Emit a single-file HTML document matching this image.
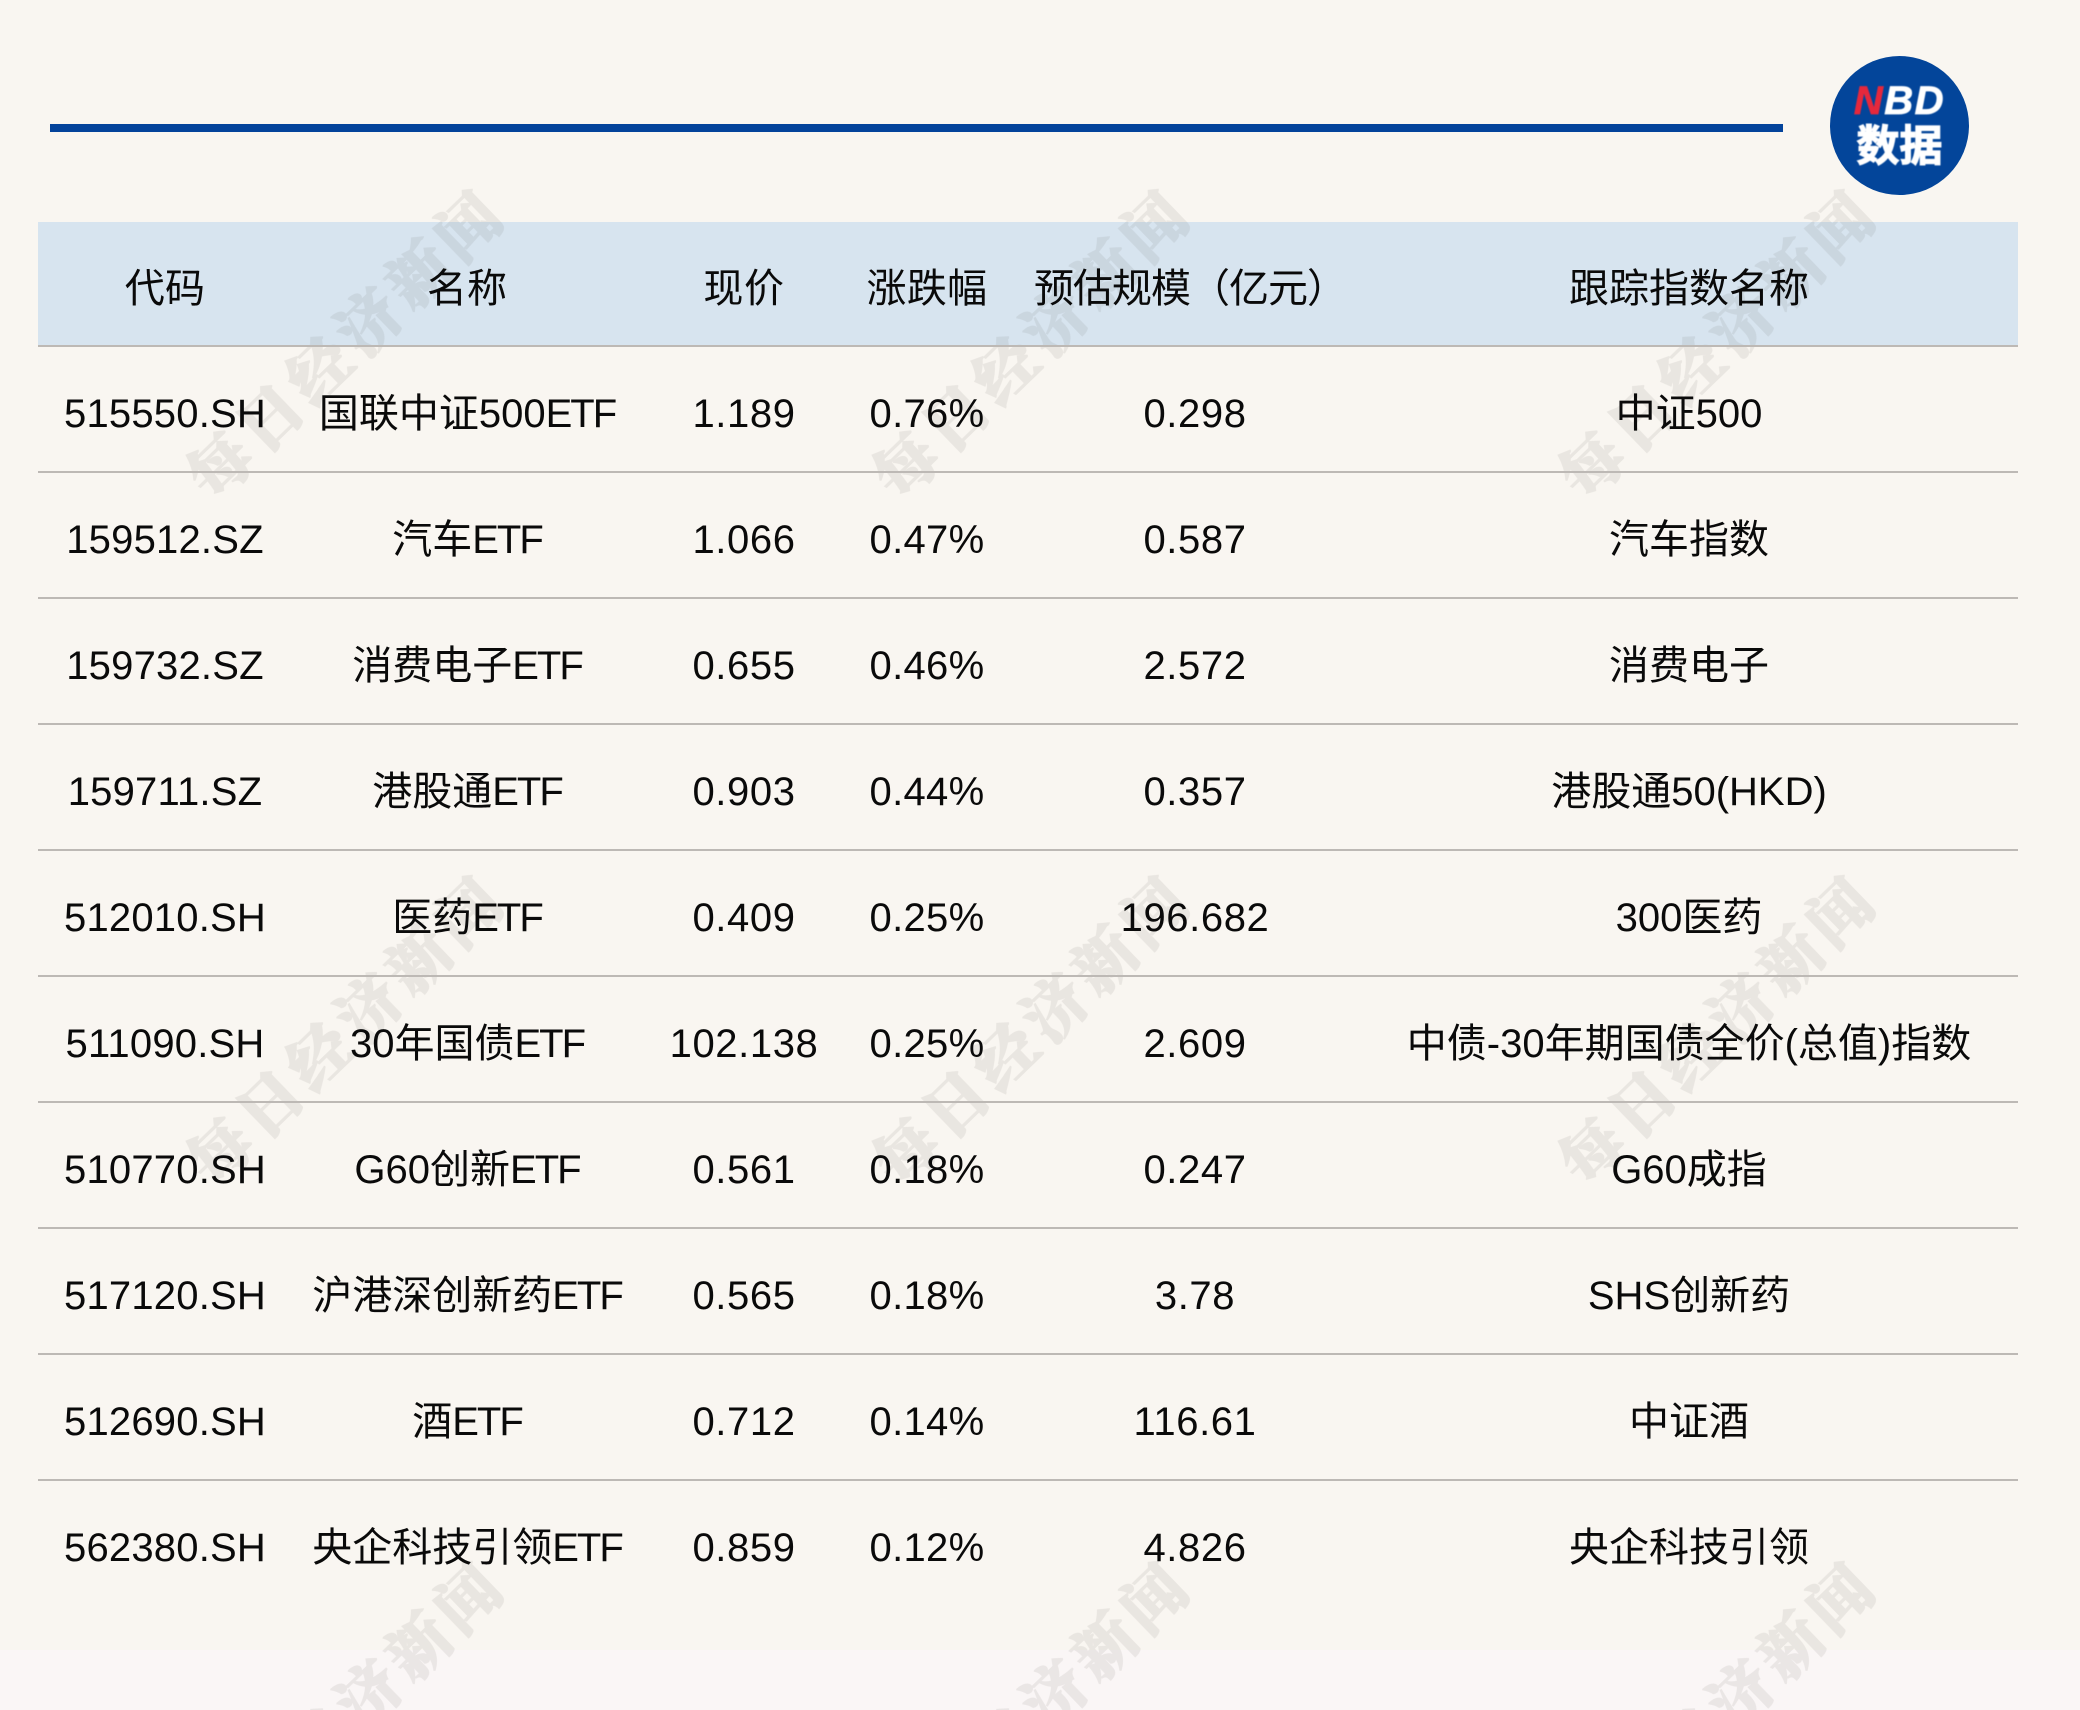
<!DOCTYPE html>
<html lang="zh-CN"><head><meta charset="utf-8"><title>NBD数据</title>
<style>
*{margin:0;padding:0;box-sizing:border-box}
html,body{width:2080px;height:1710px;overflow:hidden;background:#f9f6f1}
body{position:relative;font-family:"Liberation Sans","Noto Sans CJK SC",sans-serif;color:#0a0a0a;font-size:40px}
.low{position:absolute;left:0;right:0;top:1650px;height:60px;background:#faf6f6}
.bar{position:absolute;left:50px;top:124px;width:1733px;height:8px;background:#03439b}
.logo{position:absolute;left:1830px;top:56px;width:139px;height:139px;border-radius:50%;background:#03459a;overflow:hidden}
.logo div{position:absolute;left:0;width:139px;text-align:center;color:#fff;font-weight:700;white-space:nowrap;filter:blur(.5px)}
.n{top:23px;font-size:40px;line-height:45px;font-style:italic;letter-spacing:1.5px;-webkit-text-stroke:.8px #fff}
.n b{color:#e5283c;-webkit-text-stroke:.8px #e5283c}
.s{top:62px;font-size:43px;line-height:50px;font-family:"Noto Sans CJK SC",sans-serif;font-weight:900;-webkit-text-stroke:1.2px #fff}
.head{position:absolute;left:38px;top:222px;width:1980px;height:124px;background:#d7e4ef}
.ln{position:absolute;left:38px;width:1980px;height:2px;background:#bdb9b5}
.wms{position:absolute;left:0;top:0;width:2080px;height:1710px;overflow:hidden;display:block}
.wms text{font-family:"Noto Serif CJK SC",serif;font-weight:900;font-size:62px;letter-spacing:7px;text-anchor:middle;fill:#5a554e;stroke:#5a554e;stroke-width:1.5px}
.r{position:absolute;left:0;width:2080px;height:50px;line-height:50px;margin-top:1px}
.r span{position:absolute;top:0;width:640px;text-align:center;white-space:nowrap}
.r i{font-style:normal;letter-spacing:-2px}
.a{left:-155px;letter-spacing:.2px}.b{left:147px}.c{left:424px;letter-spacing:.6px}.d{left:607px;letter-spacing:.3px}.e{left:875px;letter-spacing:.6px}.f{left:1369px}
.r .e0{left:870px;letter-spacing:-1px}
</style></head><body>
<div class="low"></div>
<div class="head"></div>
<div class="bar"></div>
<div class="logo"><div class="n"><b>N</b>BD</div><div class="s">数据</div></div>

<svg class="wms" width="2080" height="1710" viewBox="0 0 2080 1710"><g opacity=".095">
<text transform="translate(347 344) rotate(-44)" y="22">每日经济新闻</text>
<text transform="translate(1033 344) rotate(-44)" y="22">每日经济新闻</text>
<text transform="translate(1719 344) rotate(-44)" y="22">每日经济新闻</text>
<text transform="translate(347 1030) rotate(-44)" y="22">每日经济新闻</text>
<text transform="translate(1033 1030) rotate(-44)" y="22">每日经济新闻</text>
<text transform="translate(1719 1030) rotate(-44)" y="22">每日经济新闻</text>
<text transform="translate(347 1716) rotate(-44)" y="22">每日经济新闻</text>
<text transform="translate(1033 1716) rotate(-44)" y="22">每日经济新闻</text>
<text transform="translate(1719 1716) rotate(-44)" y="22">每日经济新闻</text>
</g></svg>

<div class="ln" style="top:345px"></div>
<div class="ln" style="top:471px"></div>
<div class="ln" style="top:597px"></div>
<div class="ln" style="top:723px"></div>
<div class="ln" style="top:849px"></div>
<div class="ln" style="top:975px"></div>
<div class="ln" style="top:1101px"></div>
<div class="ln" style="top:1227px"></div>
<div class="ln" style="top:1353px"></div>
<div class="ln" style="top:1479px"></div>

<div class="r" style="top:263px"><span class="a">代码</span><span class="b">名称</span><span class="c">现价</span><span class="d">涨跌幅</span><span class="e0">预估规模（亿元）</span><span class="f">跟踪指数名称</span></div>
<div class="r" style="top:388px"><span class="a">515550.SH</span><span class="b">国联中证500<i>ETF</i></span><span class="c">1.189</span><span class="d">0.76%</span><span class="e">0.298</span><span class="f">中证500</span></div>
<div class="r" style="top:514px"><span class="a">159512.SZ</span><span class="b">汽车<i>ETF</i></span><span class="c">1.066</span><span class="d">0.47%</span><span class="e">0.587</span><span class="f">汽车指数</span></div>
<div class="r" style="top:640px"><span class="a">159732.SZ</span><span class="b">消费电子<i>ETF</i></span><span class="c">0.655</span><span class="d">0.46%</span><span class="e">2.572</span><span class="f">消费电子</span></div>
<div class="r" style="top:766px"><span class="a">159711.SZ</span><span class="b">港股通<i>ETF</i></span><span class="c">0.903</span><span class="d">0.44%</span><span class="e">0.357</span><span class="f">港股通50(HKD)</span></div>
<div class="r" style="top:892px"><span class="a">512010.SH</span><span class="b">医药<i>ETF</i></span><span class="c">0.409</span><span class="d">0.25%</span><span class="e">196.682</span><span class="f">300医药</span></div>
<div class="r" style="top:1018px"><span class="a">511090.SH</span><span class="b">30年国债<i>ETF</i></span><span class="c">102.138</span><span class="d">0.25%</span><span class="e">2.609</span><span class="f">中债-30年期国债全价(总值)指数</span></div>
<div class="r" style="top:1144px"><span class="a">510770.SH</span><span class="b">G60创新<i>ETF</i></span><span class="c">0.561</span><span class="d">0.18%</span><span class="e">0.247</span><span class="f">G60成指</span></div>
<div class="r" style="top:1270px"><span class="a">517120.SH</span><span class="b">沪港深创新药<i>ETF</i></span><span class="c">0.565</span><span class="d">0.18%</span><span class="e">3.78</span><span class="f">SHS创新药</span></div>
<div class="r" style="top:1396px"><span class="a">512690.SH</span><span class="b">酒<i>ETF</i></span><span class="c">0.712</span><span class="d">0.14%</span><span class="e">116.61</span><span class="f">中证酒</span></div>
<div class="r" style="top:1522px"><span class="a">562380.SH</span><span class="b">央企科技引领<i>ETF</i></span><span class="c">0.859</span><span class="d">0.12%</span><span class="e">4.826</span><span class="f">央企科技引领</span></div>
</body></html>
